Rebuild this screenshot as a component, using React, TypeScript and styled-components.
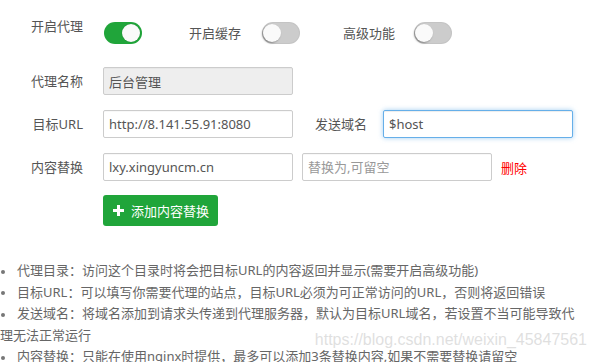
import React, { useEffect, useRef } from "react";
import styled, { createGlobalStyle } from "styled-components";

const GlobalStyle = createGlobalStyle`
    html, body {
        margin: 0;
        background: #fff;
    }
    body {
        font-family: "Noto Sans", "Noto Sans CJK SC", sans-serif;
        font-size: 13px;
        color: #555;
    }
`;

export default function App() {
    const hostRef = useRef<HTMLInputElement>(null);

    useEffect(() => {
        const el = hostRef.current;
        if (el) {
            el.focus();
            el.setSelectionRange(el.value.length, el.value.length);
        }
    }, []);

    return (
        <>
            <GlobalStyle />
            <Page>
                <SwitchRow>
                    <Label>开启代理</Label>
                    <SwitchGroup>
                        <Toggle $on />
                        <SwitchLabel $w={120} $pr={21}>
                            开启缓存
                        </SwitchLabel>
                        <Toggle />
                        <SwitchLabel $w={114} $pr={19}>
                            高级功能
                        </SwitchLabel>
                        <Toggle />
                    </SwitchGroup>
                </SwitchRow>

                <Row>
                    <Label>代理名称</Label>
                    <Input $disabled readOnly defaultValue="后台管理" />
                </Row>

                <Row>
                    <Label>目标URL</Label>
                    <Input defaultValue="http://8.141.55.91:8080" />
                    <Label $w={90} $pr={16}>
                        发送域名
                    </Label>
                    <Input $focus ref={hostRef} defaultValue="$host" />
                </Row>

                <Row $gap={14}>
                    <Label>内容替换</Label>
                    <Input defaultValue="lxy.xingyuncm.cn" />
                    <Input $ml={9} placeholder="替换为,可留空" />
                    <DeleteLink>删除</DeleteLink>
                </Row>

                <Row $gap={0}>
                    <AddButton>
                        <svg width="11" height="11" viewBox="0 0 11 11">
                            <rect x="0" y="4" width="11" height="3" fill="#fff" />
                            <rect x="4" y="0" width="3" height="11" fill="#fff" />
                        </svg>
                        添加内容替换
                    </AddButton>
                </Row>

                <Tips>
                    <li>代理目录：访问这个目录时将会把目标URL的内容返回并显示(需要开启高级功能)</li>
                    <li>目标URL：可以填写你需要代理的站点，目标URL必须为可正常访问的URL，否则将返回错误</li>
                    <li>
                        发送域名：将域名添加到请求头传递到代理服务器，默认为目标URL域名，若设置不当可能导致代理无法正常运行
                    </li>
                    <li>内容替换：只能在使用nginx时提供，最多可以添加3条替换内容,如果不需要替换请留空</li>
                </Tips>

                <Watermark>https://blog.csdn.net/weixin_45847561</Watermark>
            </Page>
        </>
    );
}

const Page = styled.div`
    position: relative;
    width: 596px;
    height: 362px;
    overflow: hidden;
    padding-top: 18px;
    box-sizing: border-box;
`;

const Row = styled.div<{ $gap?: number }>`
    display: flex;
    align-items: center;
    margin-bottom: ${(p) => p.$gap ?? 15}px;
`;

const SwitchRow = styled.div`
    display: flex;
    align-items: flex-start;
    margin-bottom: 23px;
`;

const Label = styled.span<{ $w?: number; $pr?: number }>`
    width: ${(p) => p.$w ?? 103}px;
    padding-right: ${(p) => p.$pr ?? 20}px;
    box-sizing: border-box;
    flex-shrink: 0;
    text-align: right;
    line-height: 16px;
    color: #555;
`;

const SwitchGroup = styled.div`
    display: flex;
    align-items: center;
    margin-top: 4px;
    margin-left: 1px;
`;

const SwitchLabel = styled.span<{ $w: number; $pr: number }>`
    width: ${(p) => p.$w}px;
    padding-right: ${(p) => p.$pr}px;
    box-sizing: border-box;
    text-align: right;
    line-height: 22px;
    color: #555;
`;

const Toggle = styled.span<{ $on?: boolean }>`
    position: relative;
    display: inline-block;
    width: 38px;
    height: 22px;
    border-radius: 11px;
    background: ${(p) => (p.$on ? "#20a53a" : "#cccccc")};
    box-shadow: ${(p) => (p.$on ? "none" : "inset 0 0 0 1px rgba(0,0,0,0.04)")};

    &::after {
        content: "";
        position: absolute;
        top: 2px;
        left: ${(p) => (p.$on ? "18px" : "1px")};
        width: 18px;
        height: 18px;
        border-radius: 50%;
        background: #fafafa;
        box-shadow: ${(p) =>
            p.$on ? "0 0 1px rgba(0,0,0,0.3)" : "-1px 1px 2px rgba(0,0,0,0.35)"};
    }
`;

const Input = styled.input<{ $disabled?: boolean; $focus?: boolean; $ml?: number }>`
    width: 190px;
    height: 28px;
    margin-left: ${(p) => p.$ml ?? 0}px;
    padding: 0 5px;
    box-sizing: border-box;
    flex-shrink: 0;
    border: 1px solid ${(p) => (p.$focus ? "#66afe9" : "#ccc")};
    border-radius: 2px;
    background: ${(p) => (p.$disabled ? "#eee" : "#fff")};
    color: #555;
    font-family: inherit;
    font-size: 13px;
    outline: none;
    caret-color: #000;
    box-shadow: ${(p) =>
        p.$focus
            ? "inset 0 1px 1px rgba(0,0,0,.075), 0 0 5px rgba(102,175,233,.6)"
            : "inset 0 1px 1px rgba(0,0,0,.03)"};

    &::placeholder {
        color: #999;
    }
`;

const DeleteLink = styled.a`
    margin-left: 9px;
    color: #f00;
    cursor: pointer;
`;

const AddButton = styled.button`
    display: inline-flex;
    align-items: center;
    gap: 7px;
    height: 31px;
    margin-left: 103px;
    padding: 0 9px 0 10px;
    border: none;
    border-radius: 3px;
    background: #20a53a;
    color: #fff;
    font-family: inherit;
    font-size: 13px;
    cursor: pointer;
`;

const Tips = styled.ul`
    list-style: none;
    margin: 34px 0 0;
    padding: 0;
    width: 582px;
    color: #666;

    li {
        line-height: 21.5px;

        &::before {
            content: "";
            display: inline-block;
            width: 4px;
            height: 4px;
            margin: 0 12px 0 1px;
            border-radius: 50%;
            background: #777;
            vertical-align: middle;
        }
    }
`;

const Watermark = styled.div`
    position: absolute;
    top: 332px;
    right: 9px;
    font-family: "Liberation Sans", Arial, sans-serif;
    font-size: 16px;
    line-height: 16px;
    color: rgba(218, 218, 218, 0.85);
    pointer-events: none;
`;
